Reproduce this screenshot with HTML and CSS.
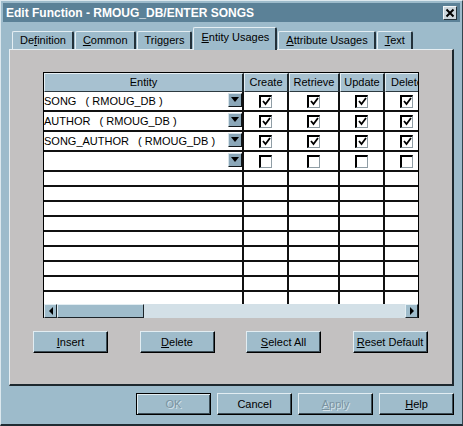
FILE: index.html
```html
<!DOCTYPE html>
<html>
<head>
<meta charset="utf-8">
<title>Edit Function</title>
<link rel="stylesheet" href="styles.css">
</head>
<body>
<div class="window">
  <div class="titlebar">
    <span class="title">Edit Function - RMOUG_DB/ENTER SONGS</span>
    <span class="close"><svg width="12" height="12" viewBox="0 0 12 12"><path d="M2.5 2.5 L9.5 9.5 M9.5 2.5 L2.5 9.5" stroke="#000" stroke-width="2"/></svg></span>
  </div>
  <div class="tabs">
    <div class="tab">De<u>f</u>inition</div>
    <div class="tab"><u>C</u>ommon</div>
    <div class="tab">Triggers</div>
    <div class="tab selected"><u>E</u>ntity Usages</div>
    <div class="tab"><u>A</u>ttribute Usages</div>
    <div class="tab"><u>T</u>ext</div>
  </div>
  <div class="panel">
    <div class="grid">
      <div class="grid-head">
        <div class="hcell">Entity</div>
        <div class="hcell">Create</div>
        <div class="hcell">Retrieve</div>
        <div class="hcell">Update</div>
        <div class="hcell">Delete</div>
      </div>
      <div class="grid-body">
        <div class="row">
          <div class="cell entity"><span class="etext">SONG   ( RMOUG_DB )</span><span class="combo"><svg width="12" height="12" viewBox="0 0 12 12"><path d="M2 3 H10 L6 8 Z" fill="#000"/></svg></span></div>
          <div class="cell check"><span class="box checked"><svg width="9" height="9" viewBox="0 0 9 9"><path d="M1 4 L3.5 7 L8 1" fill="none" stroke="#000" stroke-width="1.8"/></svg></span></div>
          <div class="cell check"><span class="box checked"><svg width="9" height="9" viewBox="0 0 9 9"><path d="M1 4 L3.5 7 L8 1" fill="none" stroke="#000" stroke-width="1.8"/></svg></span></div>
          <div class="cell check"><span class="box checked"><svg width="9" height="9" viewBox="0 0 9 9"><path d="M1 4 L3.5 7 L8 1" fill="none" stroke="#000" stroke-width="1.8"/></svg></span></div>
          <div class="cell check"><span class="box checked"><svg width="9" height="9" viewBox="0 0 9 9"><path d="M1 4 L3.5 7 L8 1" fill="none" stroke="#000" stroke-width="1.8"/></svg></span></div>
        </div>
        <div class="row">
          <div class="cell entity"><span class="etext">AUTHOR   ( RMOUG_DB )</span><span class="combo"><svg width="12" height="12" viewBox="0 0 12 12"><path d="M2 3 H10 L6 8 Z" fill="#000"/></svg></span></div>
          <div class="cell check"><span class="box checked"><svg width="9" height="9" viewBox="0 0 9 9"><path d="M1 4 L3.5 7 L8 1" fill="none" stroke="#000" stroke-width="1.8"/></svg></span></div>
          <div class="cell check"><span class="box checked"><svg width="9" height="9" viewBox="0 0 9 9"><path d="M1 4 L3.5 7 L8 1" fill="none" stroke="#000" stroke-width="1.8"/></svg></span></div>
          <div class="cell check"><span class="box checked"><svg width="9" height="9" viewBox="0 0 9 9"><path d="M1 4 L3.5 7 L8 1" fill="none" stroke="#000" stroke-width="1.8"/></svg></span></div>
          <div class="cell check"><span class="box checked"><svg width="9" height="9" viewBox="0 0 9 9"><path d="M1 4 L3.5 7 L8 1" fill="none" stroke="#000" stroke-width="1.8"/></svg></span></div>
        </div>
        <div class="row">
          <div class="cell entity"><span class="etext">SONG_AUTHOR   ( RMOUG_DB )</span><span class="combo"><svg width="12" height="12" viewBox="0 0 12 12"><path d="M2 3 H10 L6 8 Z" fill="#000"/></svg></span></div>
          <div class="cell check"><span class="box checked"><svg width="9" height="9" viewBox="0 0 9 9"><path d="M1 4 L3.5 7 L8 1" fill="none" stroke="#000" stroke-width="1.8"/></svg></span></div>
          <div class="cell check"><span class="box checked"><svg width="9" height="9" viewBox="0 0 9 9"><path d="M1 4 L3.5 7 L8 1" fill="none" stroke="#000" stroke-width="1.8"/></svg></span></div>
          <div class="cell check"><span class="box checked"><svg width="9" height="9" viewBox="0 0 9 9"><path d="M1 4 L3.5 7 L8 1" fill="none" stroke="#000" stroke-width="1.8"/></svg></span></div>
          <div class="cell check"><span class="box checked"><svg width="9" height="9" viewBox="0 0 9 9"><path d="M1 4 L3.5 7 L8 1" fill="none" stroke="#000" stroke-width="1.8"/></svg></span></div>
        </div>
        <div class="row">
          <div class="cell entity"><span class="etext"></span><span class="combo"><svg width="12" height="12" viewBox="0 0 12 12"><path d="M2 3 H10 L6 8 Z" fill="#000"/></svg></span></div>
          <div class="cell check"><span class="box"></span></div>
          <div class="cell check"><span class="box"></span></div>
          <div class="cell check"><span class="box"></span></div>
          <div class="cell check"><span class="box"></span></div>
        </div>
        <div class="row empty"><div class="cell"></div><div class="cell"></div><div class="cell"></div><div class="cell"></div><div class="cell"></div></div>
        <div class="row empty"><div class="cell"></div><div class="cell"></div><div class="cell"></div><div class="cell"></div><div class="cell"></div></div>
        <div class="row empty"><div class="cell"></div><div class="cell"></div><div class="cell"></div><div class="cell"></div><div class="cell"></div></div>
        <div class="row empty"><div class="cell"></div><div class="cell"></div><div class="cell"></div><div class="cell"></div><div class="cell"></div></div>
        <div class="row empty"><div class="cell"></div><div class="cell"></div><div class="cell"></div><div class="cell"></div><div class="cell"></div></div>
        <div class="row empty"><div class="cell"></div><div class="cell"></div><div class="cell"></div><div class="cell"></div><div class="cell"></div></div>
        <div class="row empty"><div class="cell"></div><div class="cell"></div><div class="cell"></div><div class="cell"></div><div class="cell"></div></div>
        <div class="row empty"><div class="cell"></div><div class="cell"></div><div class="cell"></div><div class="cell"></div><div class="cell"></div></div>
        <div class="row empty"><div class="cell"></div><div class="cell"></div><div class="cell"></div><div class="cell"></div><div class="cell"></div></div>
      </div>
      <div class="hscroll">
        <span class="sbtn"><svg width="6" height="8" viewBox="0 0 6 8"><path d="M5 0 V8 L1 4 Z" fill="#000"/></svg></span>
        <span class="thumb"></span>
        <span class="track"></span>
        <span class="sbtn"><svg width="6" height="8" viewBox="0 0 6 8"><path d="M1 0 V8 L5 4 Z" fill="#000"/></svg></span>
      </div>
    </div>
    <div class="actions">
      <div class="btn"><u>I</u>nsert</div>
      <div class="btn"><u>D</u>elete</div>
      <div class="btn"><u>S</u>elect All</div>
      <div class="btn"><u>R</u>eset Default</div>
    </div>
  </div>
  <div class="footer">
    <div class="btn default disabled">OK</div>
    <div class="btn">Cancel</div>
    <div class="btn disabled"><u>A</u>pply</div>
    <div class="btn"><u>H</u>elp</div>
  </div>
</div>
</body>
</html>
```

FILE: styles.css
```css
html, body {
  margin: 0;
  padding: 0;
}
body {
  width: 463px;
  height: 426px;
  overflow: hidden;
  background: #9dbbcb;
  font-family: "Liberation Sans", Arial, sans-serif;
  font-size: 11px;
  color: #000;
}
.window {
  box-sizing: border-box;
  width: 463px;
  height: 426px;
  border-top: 1px solid #dce8ee;
  border-left: 1px solid #dce8ee;
  border-right: 1px solid #33444e;
  border-bottom: 2px solid #1f2c33;
  padding: 2px 2px 0 2px;
  display: flex;
  flex-direction: column;
}
.titlebar {
  height: 19px;
  background: #5b8197;
  display: flex;
  align-items: center;
  justify-content: space-between;
  padding: 0 3px;
}
.title {
  color: #fff;
  font-weight: bold;
  font-size: 12px;
  white-space: pre;
}
.close {
  box-sizing: border-box;
  width: 14px;
  height: 14px;
  background: #cdd7dd;
  border-top: 1px solid #f2f6f8;
  border-left: 1px solid #f2f6f8;
  border-right: 1px solid #26343c;
  border-bottom: 1px solid #26343c;
  display: flex;
  align-items: center;
  justify-content: center;
}
.tabs {
  margin-top: 5px;
  height: 22px;
  padding-left: 9px;
  display: flex;
  align-items: flex-end;
  gap: 1px;
  position: relative;
  z-index: 2;
}
.tab {
  box-sizing: border-box;
  height: 18px;
  padding: 0 6px 0 7px;
  line-height: 17px;
  white-space: nowrap;
  background: #9dbbcb;
  border-top: 1px solid #e4eef3;
  border-left: 1px solid #e4eef3;
  border-right: 2px solid #23313a;
  border-radius: 2px 2px 0 0;
}
.tab.selected {
  height: 23px;
  line-height: 19px;
  padding-bottom: 3px;
  margin-bottom: -1px;
  background: #9dbbcb;
}
.panel {
  box-sizing: border-box;
  height: 337px;
  margin: 0 6px;
  background: #c3c1c1;
  border-top: 1px solid #e6eef2;
  border-left: 1px solid #e6eef2;
  border-right: 2px solid #1d282e;
  border-bottom: 2px solid #1d282e;
  padding: 22px 0 0 33px;
}
.grid {
  box-sizing: border-box;
  width: 376px;
  height: 246px;
  border-top: 1px solid #000;
  border-left: 1px solid #000;
  border-right: 1px solid #000;
  overflow: hidden;
  display: flex;
  flex-direction: column;
  background: #fff;
}
.grid-head {
  display: grid;
  grid-template-columns: 200px 45px 51px 45px 45px;
  width: 386px;
  height: 19px;
  flex: none;
}
.hcell {
  box-sizing: border-box;
  background: #a7c1d0;
  border-top: 1px solid #e6eff4;
  border-left: 1px solid #e6eff4;
  border-right: 2px solid #1e272c;
  border-bottom: 1px solid #2d3a41;
  text-align: center;
  line-height: 17px;
  white-space: nowrap;
  overflow: hidden;
}
.grid-body {
  flex: 1;
  overflow: hidden;
  background: #fff;
}
.row {
  display: grid;
  grid-template-columns: 200px 45px 51px 45px 45px;
  width: 386px;
  height: 20px;
}
.row.empty {
  height: 15px;
}
.cell {
  box-sizing: border-box;
  border-right: 2px solid #111;
  border-bottom: 2px solid #111;
  display: flex;
  align-items: center;
}
.entity {
  justify-content: space-between;
  align-items: flex-start;
}
.etext {
  white-space: pre;
  line-height: 18px;
}
.combo {
  box-sizing: border-box;
  width: 14px;
  height: 14px;
  margin-top: 1px;
  background: #8ba7b8;
  border-top: 1px solid #d6e3ea;
  border-left: 1px solid #d6e3ea;
  border-right: 1px solid #101619;
  border-bottom: 1px solid #101619;
  display: flex;
  align-items: center;
  justify-content: center;
}
.check {
  justify-content: center;
}
.box {
  box-sizing: border-box;
  width: 13px;
  height: 13px;
  background: #fff;
  border-top: 2px solid #000;
  border-left: 2px solid #000;
  border-right: 1px solid #8f9da5;
  border-bottom: 1px solid #8f9da5;
  display: flex;
  align-items: center;
  justify-content: center;
}
.hscroll {
  flex: none;
  height: 14px;
  display: flex;
  background: #d3e0e7;
}
.sbtn {
  box-sizing: border-box;
  width: 13px;
  height: 14px;
  background: #9fbccb;
  border-top: 1px solid #e2edf2;
  border-left: 1px solid #e2edf2;
  border-right: 1px solid #1c2429;
  border-bottom: 1px solid #1c2429;
  display: flex;
  align-items: center;
  justify-content: center;
}
.thumb {
  box-sizing: border-box;
  width: 87px;
  height: 14px;
  background: #9fbccb;
  border-top: 1px solid #e2edf2;
  border-left: 1px solid #e2edf2;
  border-right: 1px solid #1c2429;
  border-bottom: 1px solid #1c2429;
}
.track {
  flex: 1;
}
.actions {
  display: flex;
  gap: 31.5px;
  margin-top: 13px;
  margin-left: -10px;
}
.btn {
  box-sizing: border-box;
  width: 75px;
  height: 22px;
  background: #9fbccb;
  border-top: 1px solid #e2edf2;
  border-left: 1px solid #e2edf2;
  border-right: 1px solid #000;
  border-bottom: 1px solid #000;
  box-shadow: inset -1px -1px 0 #3c4d56;
  display: flex;
  align-items: center;
  justify-content: center;
  white-space: nowrap;
  padding-bottom: 1px;
}
.btn.default {
  border: 1px solid #000;
  box-shadow: inset 1px 1px 0 #e2edf2, inset -1px -1px 0 #3c4d56;
}
.btn.disabled {
  color: #7a93a1;
  text-shadow: 1px 1px 0 #d5e2e9;
}
.footer {
  display: flex;
  justify-content: flex-end;
  gap: 6px;
  margin: 7px 6px 0 0;
}
```
